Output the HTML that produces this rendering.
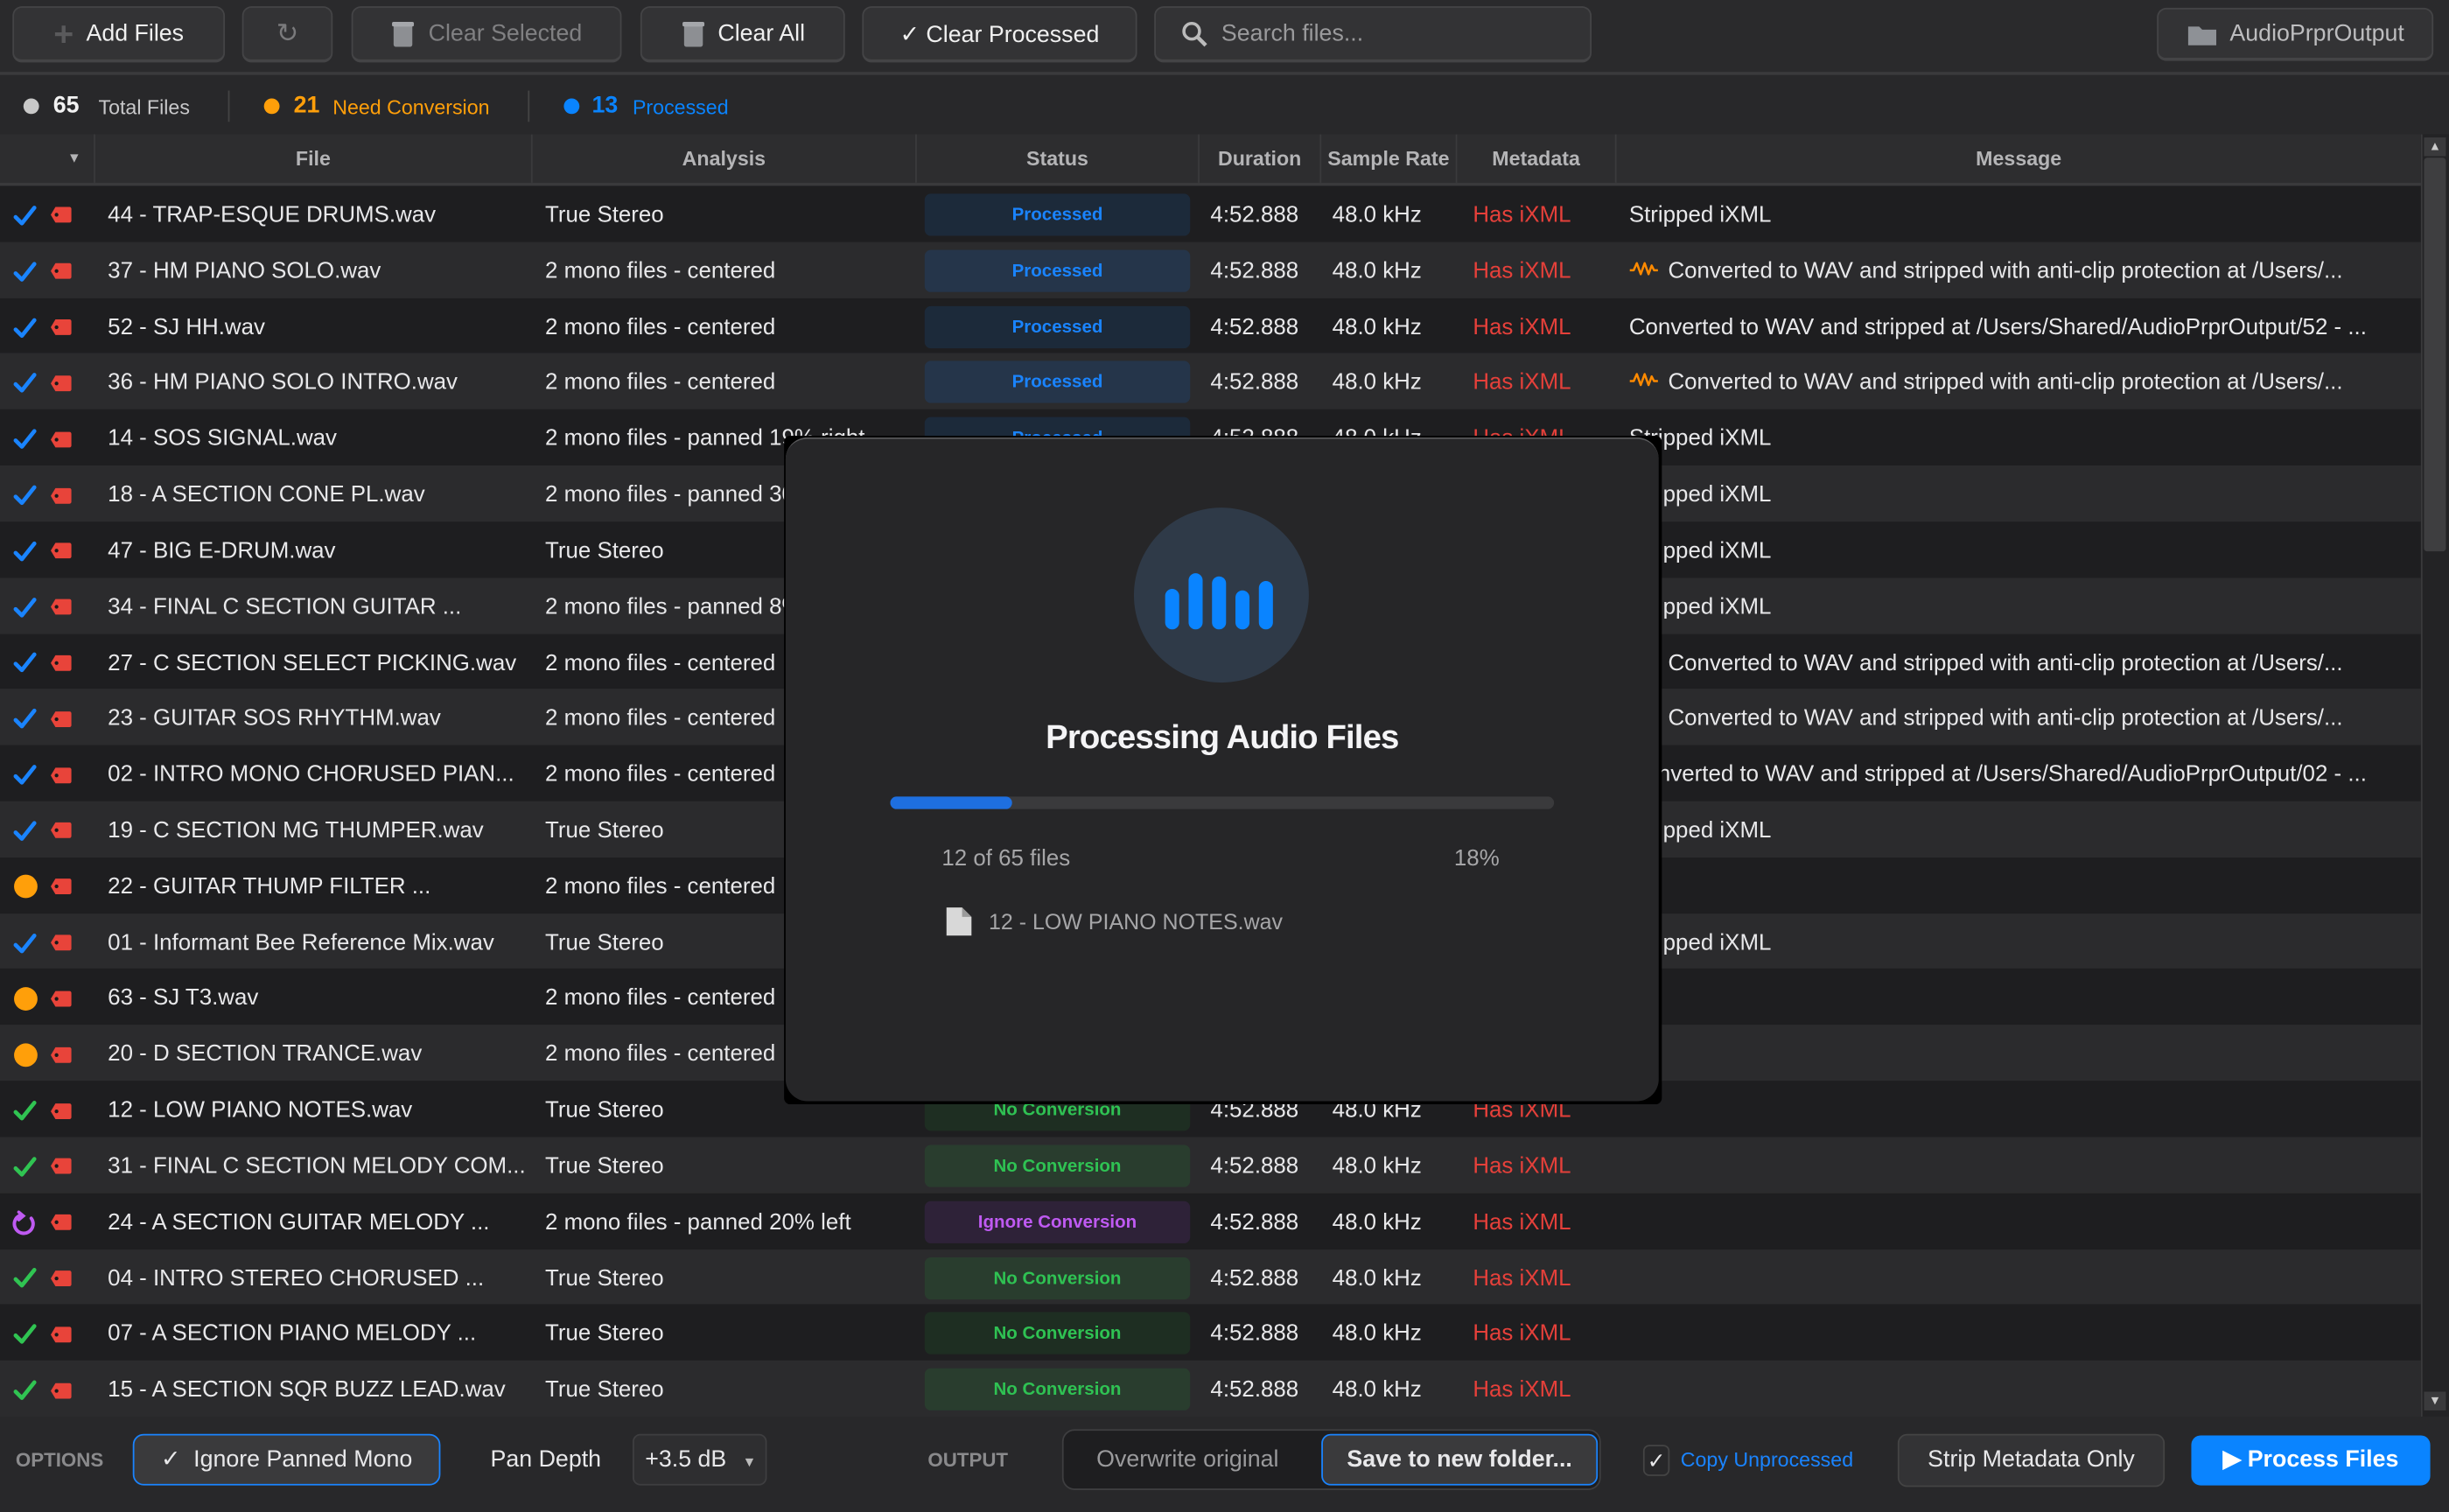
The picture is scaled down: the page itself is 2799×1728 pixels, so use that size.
<!DOCTYPE html>
<html><head><meta charset="utf-8">
<style>
*{box-sizing:border-box;margin:0;padding:0}
html,body{width:2799px;height:1728px;overflow:hidden;background:#1e1e20}
#w{position:absolute;left:0;top:0;width:1568px;height:968px;transform:scale(1.78508);transform-origin:0 0;background:#28282a;font-family:"Liberation Sans",sans-serif;color:#e8e8ea}
.a{position:absolute}
.btn{position:absolute;top:4px;height:36px;border:1px solid #444446;border-bottom:2px solid #444446;background:#333335;border-radius:6px;font-size:15px;display:flex;align-items:center;justify-content:center;gap:8px;color:#f0f0f0}
.hd{position:absolute;top:86px;height:33px;left:0;width:1550px;background:#2d2d2f;border-bottom:2px solid #3a3a3c}
.hd span{position:absolute;top:0;height:31px;line-height:31px;font-size:13px;font-weight:bold;color:#b4b4b6;text-align:center;border-left:1px solid #3a3a3c}
.row{position:absolute;left:0;width:1550px;height:35.82px;font-size:14.5px}
.row>span{position:absolute;top:2px;line-height:35.82px;white-space:nowrap;overflow:hidden}
.r0{background:#1e1e20}.r1{background:#2b2b2d}
.badge{position:absolute;left:592px;top:5px;width:170px;height:27px;border-radius:4px;font-size:11.5px;font-weight:bold;text-align:center;line-height:28px}
.pr{background:#1c2a3a;color:#1a84ff}.r1 .pr{background:#25354a}
.nc{background:#1e2e22;color:#2fc253}.r1 .nc{background:#293d2e}
.ig{background:#2e2238;color:#bf5af2}
.ne{background:#3a2a14;color:#ff9f0a}
.meta{color:#e5403a}
</style></head><body><div id="w">

<div class="a" style="left:0;top:0;width:1568px;height:48px;background:#2a2a2c;border-bottom:2px solid #3a3a3c"></div>
<div class="btn" style="left:8px;width:136px"><span style="color:#5a5a5c;font-size:22px;font-weight:bold">+</span>Add Files</div>
<div class="btn" style="left:155px;width:58px;color:#7a7a7c;font-size:17px">↻</div>
<div class="btn" style="left:225px;width:173px;color:#808082"><svg width="16" height="18" viewBox="0 0 16 18"><rect x="2" y="3" width="12" height="14" rx="1.5" fill="#8d8f93"/><rect x="1" y="1" width="14" height="3" rx="1" fill="#a5a7ab"/></svg>Clear Selected</div>
<div class="btn" style="left:410px;width:131px"><svg width="16" height="18" viewBox="0 0 16 18"><rect x="2" y="3" width="12" height="14" rx="1.5" fill="#8d8f93"/><rect x="1" y="1" width="14" height="3" rx="1" fill="#a5a7ab"/></svg>Clear All</div>
<div class="btn" style="left:552px;width:176px">✓ Clear Processed</div>
<div class="btn" style="left:739px;width:280px;justify-content:flex-start;padding-left:16px;color:#9a9a9c"><svg width="18" height="18" viewBox="0 0 18 18"><circle cx="7" cy="7" r="5" fill="none" stroke="#bbb" stroke-width="2"/><path d="M10.5 10.5 L16 16" stroke="#bbb" stroke-width="2.5"/></svg>Search files...</div>
<div class="btn" style="left:1381px;width:177px;top:5px;height:34px;color:#bdbdbf"><svg width="20" height="16" viewBox="0 0 20 16"><path d="M1 3h7l2 2h9v10H1z" fill="#8e9196"/></svg>AudioPrprOutput</div>

<div class="a" style="left:0;top:50px;width:1568px;height:36px;background:#28282a"></div>
<div class="a" style="left:15px;top:63px;width:10px;height:10px;border-radius:5px;background:#c8c8c8"></div>
<div class="a" style="left:34px;top:59px;font-size:15px;font-weight:bold;color:#f2f2f2">65</div>
<div class="a" style="left:63px;top:61px;font-size:13px;color:#c8c8ca">Total Files</div>
<div class="a" style="left:146px;top:58px;width:1px;height:20px;background:#444"></div>
<div class="a" style="left:169px;top:63px;width:10px;height:10px;border-radius:5px;background:#ff9f0a"></div>
<div class="a" style="left:188px;top:59px;font-size:15px;font-weight:bold;color:#ff9f0a">21</div>
<div class="a" style="left:213px;top:61px;font-size:13px;color:#ff9f0a">Need Conversion</div>
<div class="a" style="left:338px;top:58px;width:1px;height:20px;background:#444"></div>
<div class="a" style="left:361px;top:63px;width:10px;height:10px;border-radius:5px;background:#0a84ff"></div>
<div class="a" style="left:379px;top:59px;font-size:15px;font-weight:bold;color:#0a84ff">13</div>
<div class="a" style="left:405px;top:61px;font-size:13px;color:#0a84ff">Processed</div>

<div class="hd">
<span style="left:0;width:60px;border-left:none;font-size:9px;text-align:right;padding-right:8px">▼</span>
<span style="left:60px;width:280px">File</span>
<span style="left:340px;width:246px">Analysis</span>
<span style="left:586px;width:181px">Status</span>
<span style="left:767px;width:78px">Duration</span>
<span style="left:845px;width:87px">Sample Rate</span>
<span style="left:932px;width:102px">Metadata</span>
<span style="left:1034px;width:516px">Message</span>
</div>

<div id="rows"></div>

<div class="a" style="left:1550px;top:86px;width:18px;height:821px;background:#232325;border-left:1px solid #3a3a3c"></div>
<div class="a" style="left:1552px;top:88px;width:14px;height:12px;background:#3a3a3c;color:#ccc;font-size:8px;text-align:center;line-height:12px">▲</div>
<div class="a" style="left:1552px;top:101px;width:14px;height:252px;background:#3e3e40;border-radius:2px"></div>
<div class="a" style="left:1552px;top:891px;width:14px;height:12px;background:#3a3a3c;color:#ccc;font-size:8px;text-align:center;line-height:12px">▼</div>

<div class="a" style="left:0;top:907px;width:1568px;height:61px;background:#28282a"></div>
<div class="a" style="left:10px;top:928px;font-size:12.5px;font-weight:bold;color:#8a8a8c">OPTIONS</div>
<div class="a" style="left:85px;top:918px;width:197px;height:33px;border:1px solid #1a84ff;border-radius:7px;background:#3a3a3c;font-size:15px;text-align:center;line-height:31px">✓&nbsp; Ignore Panned Mono</div>
<div class="a" style="left:314px;top:926px;font-size:15px">Pan Depth</div>
<div class="a" style="left:405px;top:918px;width:86px;height:33px;border:1px solid #3e3e40;border-radius:5px;background:#2e2e30;font-size:15px;line-height:31px;padding-left:7px">+3.5 dB <span style="font-size:9px;color:#bbb;margin-left:6px">▼</span></div>
<div class="a" style="left:594px;top:928px;font-size:12.5px;font-weight:bold;color:#8a8a8c">OUTPUT</div>
<div class="a" style="left:680px;top:915px;width:345px;height:39px;border:1px solid #3e3e40;border-radius:8px;background:#1e1e20"></div>
<div class="a" style="left:702px;top:926px;font-size:15px;color:#9a9a9c">Overwrite original</div>
<div class="a" style="left:846px;top:918px;width:177px;height:33px;border:1px solid #1a84ff;border-radius:6px;background:#3a3a3c;font-size:15px;font-weight:bold;text-align:center;line-height:31px">Save to new folder...</div>
<div class="a" style="left:1052px;top:925px;width:17px;height:20px;border:1px solid #444;border-radius:4px;font-size:14px;text-align:center;line-height:18px">✓</div>
<div class="a" style="left:1076px;top:927px;font-size:13px;color:#1a84ff">Copy Unprocessed</div>
<div class="a" style="left:1215px;top:918px;width:171px;height:34px;border:1px solid #444;border-radius:6px;background:#333335;font-size:15px;text-align:center;line-height:32px">Strip Metadata Only</div>
<div class="a" style="left:1403px;top:919px;width:153px;height:32px;border-radius:6px;background:#0a84ff;font-size:15px;font-weight:bold;text-align:center;line-height:32px;color:#fff">▶ Process Files</div>

<div class="a" style="left:502px;top:279px;width:562px;height:428px;background:#000;border-radius:4px"></div>
<div class="a" style="left:503px;top:280px;width:559px;height:425px;background:#262628;border-radius:14px;border-top:1px solid #5a5a5c">
  <div class="a" style="left:223px;top:44px;width:112px;height:112px;border-radius:56px;background:#2f3a48"></div>
  <svg class="a" style="left:240px;top:82px" width="80" height="40" viewBox="0 0 80 40">
   <g fill="#0a84ff"><rect x="3" y="14" width="9" height="26" rx="4.5"/><rect x="18" y="4" width="9" height="36" rx="4.5"/><rect x="33" y="6" width="9" height="34" rx="4.5"/><rect x="48" y="15" width="9" height="25" rx="4.5"/><rect x="63" y="9" width="9" height="31" rx="4.5"/></g>
  </svg>
  <div class="a" style="left:0;top:179px;width:559px;text-align:center;font-size:21.5px;font-weight:bold;color:#f4f4f6;letter-spacing:-0.5px">Processing Audio Files</div>
  <div class="a" style="left:67px;top:229px;width:425px;height:8px;border-radius:4px;background:#3a3a3c"></div>
  <div class="a" style="left:67px;top:229px;width:78px;height:8px;border-radius:4px;background:#1e6fe0"></div>
  <div class="a" style="left:100px;top:261px;font-size:14.5px;color:#a6a6a8">12 of 65 files</div>
  <div class="a" style="left:428px;top:261px;font-size:14.5px;color:#a6a6a8">18%</div>
  <svg class="a" style="left:102px;top:299px" width="18" height="20" viewBox="0 0 18 20"><path d="M1 1h10l6 6v12H1z" fill="#d8d8d8"/><path d="M11 1v6h6" fill="#9a9a9a"/></svg>
  <div class="a" style="left:130px;top:301px;font-size:14px;color:#a6a6a8">12 - LOW PIANO NOTES.wav</div>
</div>

<script>
var B='<svg width="16" height="14" viewBox="0 0 16 14"><path d="M2 8 L6 12 L14 2" fill="none" stroke="#1a84ff" stroke-width="2.6" stroke-linecap="round" stroke-linejoin="round"/></svg>';
var G=B.replace('#1a84ff','#30c452');
var O='<div style="width:15px;height:15px;border-radius:8px;background:#ff9f0a"></div>';
var P='<svg width="16" height="16" viewBox="0 0 16 16"><path d="M5 3 A6 6 0 1 0 12 5" fill="none" stroke="#bf5af2" stroke-width="2.2" stroke-linecap="round"/><path d="M4 1 L7 3.5 L4 6" fill="none" stroke="#bf5af2" stroke-width="2" stroke-linecap="round"/></svg>';
var T='<svg width="14" height="11" viewBox="0 0 14 11"><path d="M3.5 0.5 H12.5 a1.2 1.2 0 0 1 1.2 1.2 V9.3 a1.2 1.2 0 0 1 -1.2 1.2 H3.5 L0.5 5.5z" fill="#e8443a"/><circle cx="4.2" cy="5.5" r="1.2" fill="#1a1a1a"/></svg>';
var W='<svg width="19" height="10" viewBox="0 0 19 10" style="vertical-align:1px;margin-right:6px"><path d="M0.5 6 L3 6 L5 1.5 L7.5 8.5 L10 1.5 L12.5 8.5 L14.5 3 L16 6 L18.5 6" fill="none" stroke="#ff8a00" stroke-width="1.4" stroke-linejoin="round"/></svg>';
var C1=W+'Converted to WAV and stripped with anti-clip protection at /Users/...';
var S='Stripped iXML';
var rows=[
[B,'44 - TRAP-ESQUE DRUMS.wav','True Stereo','pr','Processed',S],
[B,'37 - HM PIANO SOLO.wav','2 mono files - centered','pr','Processed',C1],
[B,'52 - SJ HH.wav','2 mono files - centered','pr','Processed','Converted to WAV and stripped at /Users/Shared/AudioPrprOutput/52 - ...'],
[B,'36 - HM PIANO SOLO INTRO.wav','2 mono files - centered','pr','Processed',C1],
[B,'14 - SOS SIGNAL.wav','2 mono files - panned 19% right','pr','Processed',S],
[B,'18 - A SECTION CONE PL.wav','2 mono files - panned 30% left','pr','Processed',S],
[B,'47 - BIG E-DRUM.wav','True Stereo','pr','Processed',S],
[B,'34 - FINAL C SECTION GUITAR ...','2 mono files - panned 8% left','pr','Processed',S],
[B,'27 - C SECTION SELECT PICKING.wav','2 mono files - centered','pr','Processed',C1],
[B,'23 - GUITAR SOS RHYTHM.wav','2 mono files - centered','pr','Processed',C1],
[B,'02 - INTRO MONO CHORUSED PIAN...','2 mono files - centered','pr','Processed','Converted to WAV and stripped at /Users/Shared/AudioPrprOutput/02 - ...'],
[B,'19 - C SECTION MG THUMPER.wav','True Stereo','pr','Processed',S],
[O,'22 - GUITAR THUMP FILTER ...','2 mono files - centered','ne','Needs Conversion',''],
[B,'01 - Informant Bee Reference Mix.wav','True Stereo','pr','Processed',S],
[O,'63 - SJ T3.wav','2 mono files - centered','ne','Needs Conversion',''],
[O,'20 - D SECTION TRANCE.wav','2 mono files - centered','ne','Needs Conversion',''],
[G,'12 - LOW PIANO NOTES.wav','True Stereo','nc','No Conversion',''],
[G,'31 - FINAL C SECTION MELODY COM...','True Stereo','nc','No Conversion',''],
[P,'24 - A SECTION GUITAR MELODY ...','2 mono files - panned 20% left','ig','Ignore Conversion',''],
[G,'04 - INTRO STEREO CHORUSED ...','True Stereo','nc','No Conversion',''],
[G,'07 - A SECTION PIANO MELODY ...','True Stereo','nc','No Conversion',''],
[G,'15 - A SECTION SQR BUZZ LEAD.wav','True Stereo','nc','No Conversion','']
];
var h='';
rows.forEach(function(r,i){
 var y=119+i*35.82;
 h+='<div class="row r'+(i%2)+'" style="top:'+y+'px">'+
 '<span style="left:7px;width:18px;display:flex;justify-content:center;align-items:center;height:35.82px;top:1px;line-height:normal">'+r[0]+'</span>'+
 '<span style="left:32px;width:16px;display:flex;align-items:center;height:35.82px;top:1px;line-height:normal">'+T+'</span>'+
 '<span style="left:69px;width:268px">'+r[1]+'</span>'+
 '<span style="left:349px;width:236px">'+r[2]+'</span>'+
 '<div class="badge '+r[3]+'">'+r[4]+'</div>'+
 '<span style="left:775px">4:52.888</span>'+
 '<span style="left:853px">48.0 kHz</span>'+
 '<span class="meta" style="left:943px">Has iXML</span>'+
 '<span style="left:1043px;width:505px">'+r[5]+'</span></div>';
});
document.getElementById('rows').innerHTML=h;
</script>
</div></body></html>
